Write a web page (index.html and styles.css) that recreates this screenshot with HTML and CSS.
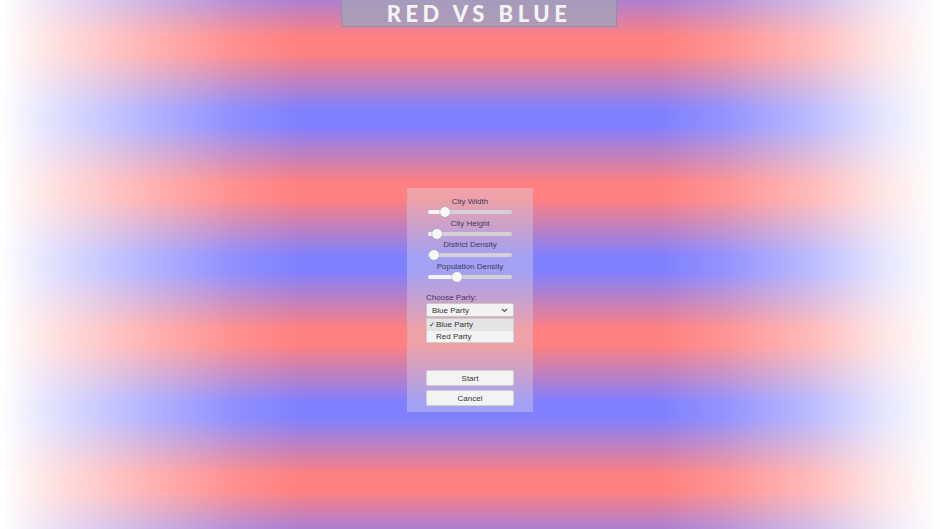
FILE: index.html
```html
<!DOCTYPE html>
<html lang="en">
<head>
    <meta charset="UTF-8">
    <meta name="viewport" content="width=device-width, initial-scale=1.0">
    <title>Red vs Blue</title>
    <link rel="stylesheet" href="styles.css">
</head>
<body>
    <div class="title-bar">RED VS BLUE</div>

    <div class="menu">
        <!-- Sliders for the city settings -->
        <div class="slider-group">
            <label for="cityWidth">City Width</label>
            <input type="range" id="cityWidth" class="slider" min="0" max="100" value="16" style="--pct: 16%">
        </div>
        <div class="slider-group">
            <label for="cityHeight">City Height</label>
            <input type="range" id="cityHeight" class="slider" min="0" max="100" value="5" style="--pct: 5%">
        </div>
        <div class="slider-group">
            <label for="districtDensity">District Density</label>
            <input type="range" id="districtDensity" class="slider" min="0" max="100" value="1" style="--pct: 1%">
        </div>
        <div class="slider-group">
            <label for="populationDensity">Population Density</label>
            <input type="range" id="populationDensity" class="slider" min="0" max="100" value="32" style="--pct: 32%">
        </div>

        <!-- Party dropdown, shown open -->
        <div class="party-label">Choose Party:</div>
        <div class="dropdown">
            <span>Blue Party</span>
            <svg class="chevron" width="7" height="5" viewBox="0 0 7 5"><path d="M1 1 L3.5 3.5 L6 1" fill="none" stroke="#555" stroke-width="1.1"/></svg>
        </div>
        <ul class="dropdown-list">
            <li class="selected"><span class="check">&#10003;</span>Blue Party</li>
            <li><span class="check"></span>Red Party</li>
        </ul>

        <button class="btn start">Start</button>
        <button class="btn">Cancel</button>
    </div>
</body>
</html>
```

FILE: styles.css
```css
body {
    margin: 0;
    height: 529px;
    overflow: hidden;
    font-family: "Liberation Sans", Arial, sans-serif;
    display: flex;
    flex-direction: column;
    align-items: center;
    /* white fade on both sides over red/blue stripes */
    background:
        linear-gradient(to right,
            rgba(255,255,255,1) 0%,
            rgba(255,255,255,0.75) 6%,
            rgba(255,255,255,0.4) 16%,
            rgba(255,255,255,0.12) 25%,
            rgba(255,255,255,0) 32%,
            rgba(255,255,255,0) 70%,
            rgba(255,255,255,0.15) 77%,
            rgba(255,255,255,0.45) 86%,
            rgba(255,255,255,0.8) 94%,
            rgba(255,255,255,1) 100%),
        repeating-linear-gradient(to bottom,
            #8080ff -36px,
            #8080ff -20px,
            #ff8080 37px,
            #ff8080 53px,
            #8080ff 110px);
}
.title-bar {
    margin-left: 18px;
    width: 276px;
    height: 27px;
    box-sizing: border-box;
    background-color: rgba(165, 160, 185, 0.85);
    border: 1px solid rgba(130, 125, 150, 0.5);
    border-top: none;
    color: #f5f2f6;
    font-family: Lato, "Open Sans", sans-serif;
    font-weight: 900;
    font-size: 22px;
    letter-spacing: 4.5px;
    line-height: 27px;
    text-align: center;
}
.menu {
    margin-top: 161px;
    width: 126px;
    box-sizing: border-box;
    padding: 9px 0 6px 19px;
    background-color: rgba(215, 210, 225, 0.4);
    display: flex;
    flex-direction: column;
}
.slider-group {
    display: flex;
    flex-direction: column;
    align-items: center;
    margin-bottom: 1.5px;
    margin-left: -19px;
}
.slider-group label, .party-label {
    font-size: 8px;
    line-height: 10px;
    color: #3b3b63;
}
.slider {
    -webkit-appearance: none;
    appearance: none;
    width: 84px;
    height: 10px;
    margin: 0;
    background: transparent;
    outline: none;
}
.slider::-webkit-slider-runnable-track {
    height: 4px;
    border-radius: 2px;
    background: linear-gradient(to right, #f4f4f4 0, #f4f4f4 calc(5px + var(--pct) * 0.74), #d2d2d6 calc(5px + var(--pct) * 0.74));
}
.slider::-webkit-slider-thumb {
    -webkit-appearance: none;
    appearance: none;
    width: 10px;
    height: 10px;
    margin-top: -3px;
    border-radius: 50%;
    background: #f7f7f7;
    box-shadow: 0 0 0 0.5px #a8a8b0;
}
.party-label {
    margin-top: 10px;
}
.dropdown {
    width: 88px;
    height: 14px;
    box-sizing: border-box;
    padding: 0 5px;
    background-color: #f2f2f2;
    border: 1px solid #c8c8cc;
    border-radius: 2px;
    display: flex;
    align-items: center;
    justify-content: space-between;
    font-size: 8px;
    color: #333;
}
.dropdown-list {
    list-style: none;
    margin: 1px 0 0;
    padding: 0;
    width: 88px;
    box-sizing: border-box;
    background-color: #f4f4f4;
    border: 1px solid #cfcfd3;
    font-size: 8px;
    color: #333;
}
.dropdown-list li {
    height: 11.5px;
    line-height: 11.5px;
    display: flex;
}
.dropdown-list li.selected {
    background-color: #e4e4e6;
}
.check {
    width: 9px;
    padding-left: 2px;
    box-sizing: border-box;
    font-size: 7px;
}
.btn {
    width: 88px;
    height: 16px;
    margin: 4px 0 0;
    padding: 0;
    background-color: #f3f3f3;
    border: 1px solid #d0d0d4;
    border-radius: 2px;
    font-family: "Liberation Sans", Arial, sans-serif;
    font-size: 8px;
    color: #333;
}
.btn.start {
    margin-top: 27px;
}
```
